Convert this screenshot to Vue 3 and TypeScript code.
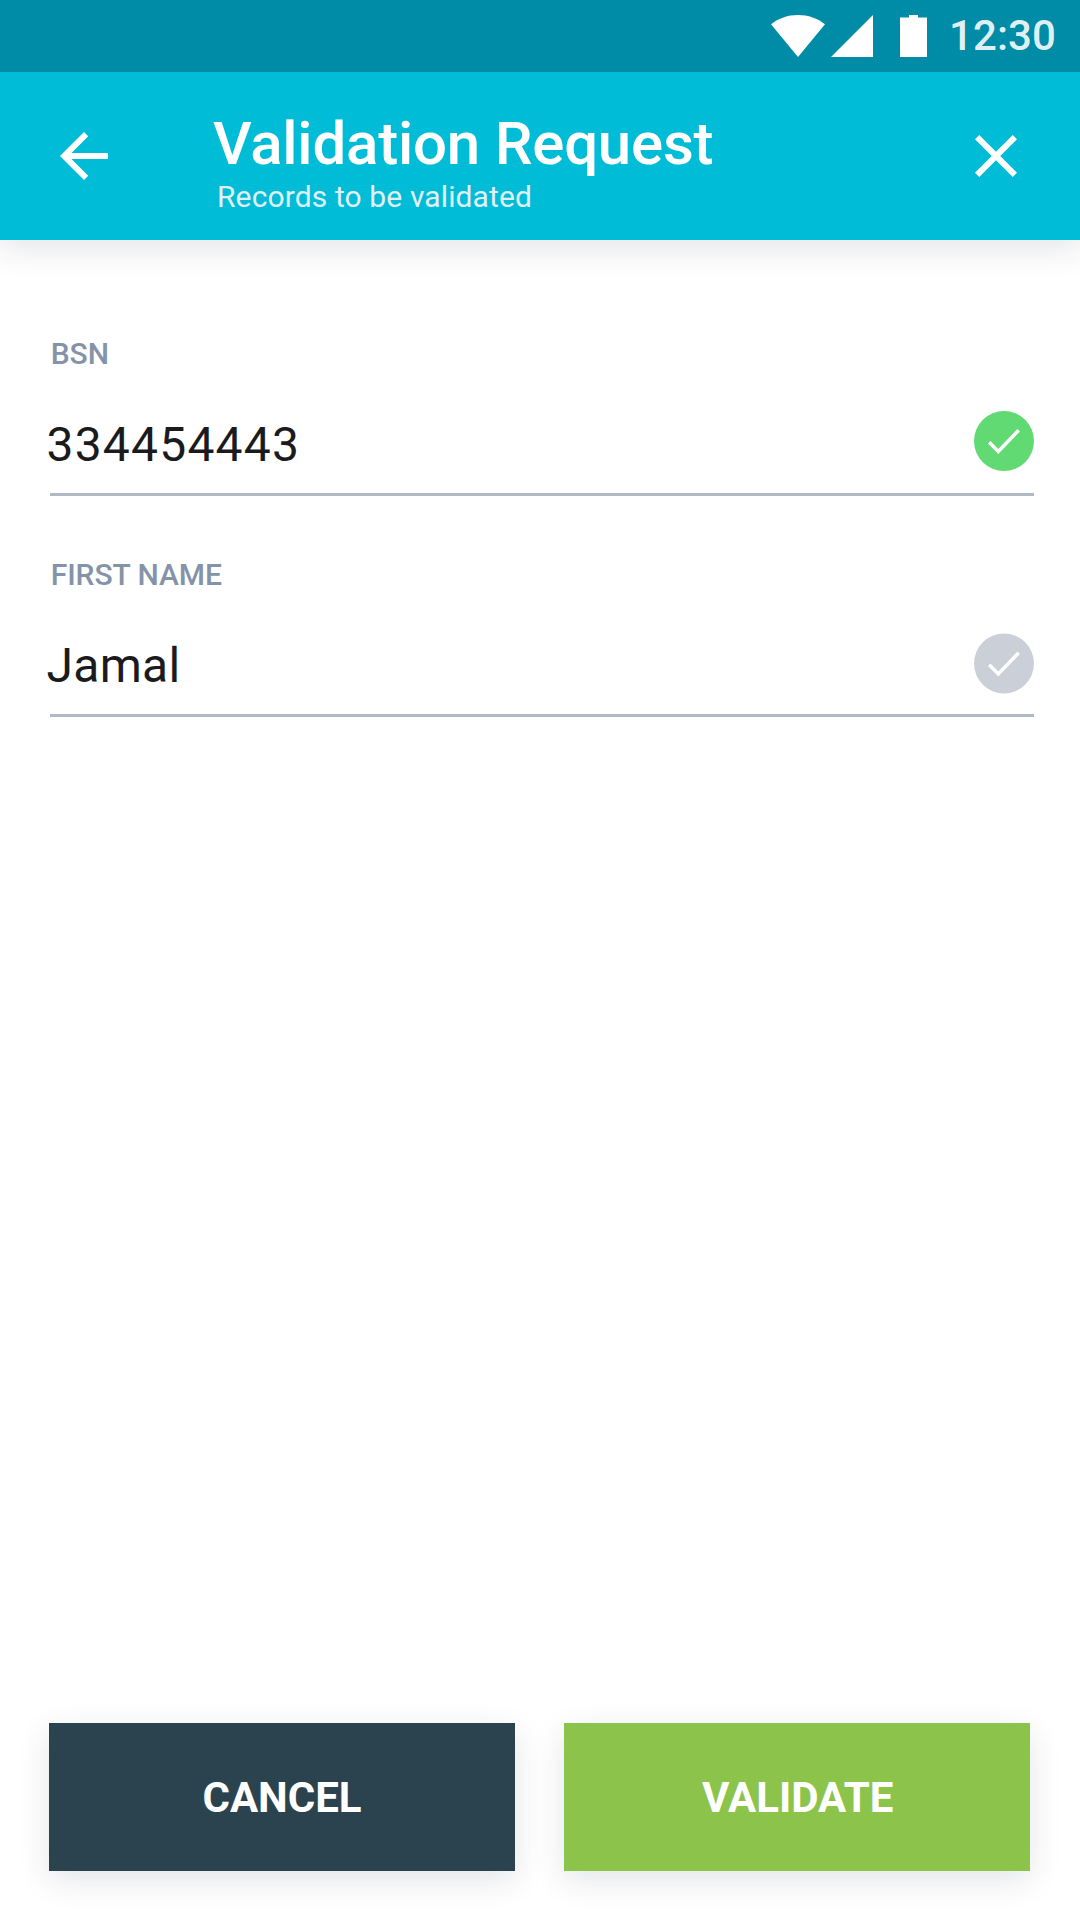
<script setup lang="ts">
import { ref } from 'vue'

interface RecordField {
  label: string
  value: string
  verified: boolean
}

const time = ref('12:30')

const fields = ref<RecordField[]>([
  { label: 'BSN', value: '334454443', verified: true },
  { label: 'FIRST NAME', value: 'Jamal', verified: false },
])
</script>

<template>
  <div class="screen">
    <div class="status-bar">
      <svg class="wifi" viewBox="0 0 54 42" aria-hidden="true">
        <path d="M27 42 0 9.300C7.500 3.300 16.700 0 27 0s19.500 3.300 27 9.300z" />
      </svg>
      <svg class="signal" viewBox="0 0 42 42" aria-hidden="true">
        <path d="M0 42H42V0z" />
      </svg>
      <svg class="battery" viewBox="0 0 27 42" aria-hidden="true">
        <path d="M0 2.600H9V0h9v2.600h9V42H0z" />
      </svg>
      <span class="time">{{ time }}</span>
    </div>

    <header class="app-bar">
      <button class="icon-button" type="button" aria-label="Back">
        <svg viewBox="0 0 24 24">
          <path d="M20 11H7.830l5.590-5.590L12 4l-8 8 8 8 1.410-1.410L7.830 13H20z" />
        </svg>
      </button>
      <div class="heading">
        <h1>Validation Request</h1>
        <p>Records to be validated</p>
      </div>
      <button class="icon-button" type="button" aria-label="Close">
        <svg viewBox="0 0 24 24">
          <path d="M19 6.410 17.590 5 12 10.590 6.410 5 5 6.410 10.590 12 5 17.590 6.410 19 12 13.410 17.590 19 19 17.590 13.410 12z" />
        </svg>
      </button>
    </header>

    <main class="records">
      <section v-for="field in fields" :key="field.label" class="field">
        <div class="label">{{ field.label }}</div>
        <div class="row">
          <span class="value" :class="{ numeric: /^\d+$/.test(field.value) }">{{ field.value }}</span>
          <svg class="check" :class="{ verified: field.verified }" viewBox="0 0 60 60">
            <circle cx="30" cy="30" r="30" />
            <path d="M15.200 31.300 24.300 40.400 44.700 19.200" />
          </svg>
        </div>
      </section>
    </main>

    <footer class="actions">
      <button class="action cancel" type="button">CANCEL</button>
      <button class="action validate" type="button">VALIDATE</button>
    </footer>
  </div>
</template>

<style>
body {
  margin: 0;
  background: #fff;
}
</style>

<style scoped>
.screen {
  display: flex;
  flex-direction: column;
  width: 100%;
  height: 100vh;
  background: #fff;
  font-family: Roboto, 'Liberation Sans', sans-serif;
}

button {
  margin: 0;
  padding: 0;
  border: 0;
  background: none;
  font-family: inherit;
}

.status-bar {
  position: relative;
  z-index: 1;
  display: flex;
  flex: none;
  justify-content: flex-end;
  box-sizing: border-box;
  height: 72px;
  padding: 15px 24px 0 0;
  background: #008ba6;
}

.status-bar svg {
  display: block;
  height: 42px;
  fill: #fff;
}

.wifi {
  width: 54px;
}

.signal {
  width: 42px;
  margin-left: 6px;
}

.battery {
  width: 27px;
  margin-left: 27px;
}

.time {
  width: 107px;
  margin-left: 22px;
  color: rgba(255, 255, 255, 0.9);
  font-size: 42px;
  font-weight: 500;
  line-height: 42px;
  letter-spacing: 0.1px;
  white-space: nowrap;
}

.app-bar {
  display: flex;
  flex: none;
  align-items: flex-start;
  box-sizing: border-box;
  height: 168px;
  padding: 36px 48px 0;
  background: #00bcd6;
  box-shadow: 0 9px 30px rgba(35, 45, 65, 0.12);
}

.icon-button {
  flex: none;
  width: 72px;
  height: 72px;
  margin-top: 12px;
}

.icon-button svg {
  display: block;
  width: 72px;
  height: 72px;
  fill: #fff;
}

.heading {
  flex: 1;
  padding-left: 93px;
}

.heading h1 {
  margin: 0;
  color: #fff;
  font-size: 60px;
  font-weight: 500;
  line-height: 72px;
  letter-spacing: -0.22px;
  white-space: nowrap;
}

.heading p {
  margin: -1px 0 0 4px;
  color: #e0f0f8;
  font-size: 30px;
  line-height: 36px;
  letter-spacing: 0.12px;
}

.records {
  flex: 1;
  padding: 96px 46px 0 50px;
}

.field {
  box-sizing: border-box;
  height: 160px;
  margin-bottom: 61px;
  border-bottom: 3px solid #b0b9c5;
}

.label {
  margin-left: 0.7px;
  color: #8493a8;
  font-size: 30px;
  font-weight: 500;
  line-height: 36px;
  letter-spacing: -0.05px;
}

.row {
  display: flex;
  align-items: flex-start;
  justify-content: space-between;
  padding-top: 39px;
}

.value {
  margin: 6px 0 0 -3.5px;
  color: #1b1b1d;
  font-size: 48px;
  line-height: 56px;
  letter-spacing: 0.3px;
}

.value.numeric {
  letter-spacing: 1.2px;
}

.check {
  display: block;
  width: 60px;
  height: 61px;
  margin-top: 1px;
}

.check.verified {
  height: 60px;
  margin-top: 0;
}

.check circle {
  fill: #cbd0d8;
}

.check.verified circle {
  fill: #62da74;
}

.check path {
  fill: none;
  stroke: #fff;
  stroke-width: 3.5;
}

.actions {
  display: flex;
  flex: none;
  gap: 49px;
  padding: 0 50px 49px 49px;
}

.action {
  flex: 1;
  height: 148px;
  padding-top: 2px;
  color: #fff;
  font-size: 42px;
  font-weight: 700;
  line-height: 50px;
  box-shadow: 0 9px 30px rgba(35, 45, 65, 0.12);
}

.cancel {
  background: #2b434f;
}

.validate {
  background: #8cc44b;
  text-indent: 1.5px;
}
</style>
